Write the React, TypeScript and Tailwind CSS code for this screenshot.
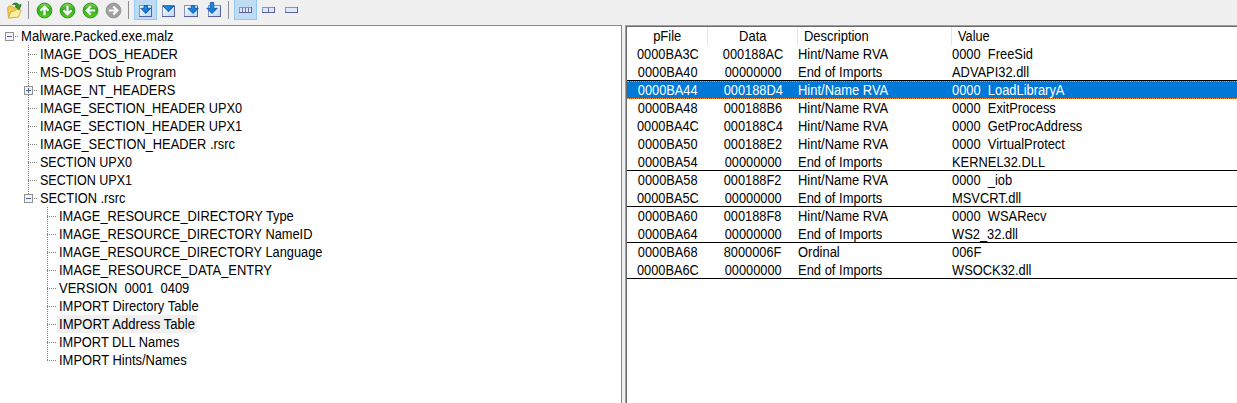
import type { ReactNode } from "react";

type TreeNode = {
  label: string;
  depth: 0 | 1 | 2;
  box?: "plus" | "minus";
  selected?: boolean;
  last?: boolean;
  fit?: string;
};

const tree: TreeNode[] = [
  { label: "Malware.Packed.exe.malz", depth: 0, box: "minus", fit: "scale-x-[0.934]" },
  { label: "IMAGE_DOS_HEADER", depth: 1, fit: "scale-x-[0.923]" },
  { label: "MS-DOS Stub Program", depth: 1, fit: "scale-x-[0.93]" },
  { label: "IMAGE_NT_HEADERS", depth: 1, box: "plus", fit: "scale-x-[0.92]" },
  { label: "IMAGE_SECTION_HEADER UPX0", depth: 1, fit: "scale-x-[0.912]" },
  { label: "IMAGE_SECTION_HEADER UPX1", depth: 1, fit: "scale-x-[0.912]" },
  { label: "IMAGE_SECTION_HEADER .rsrc", depth: 1, fit: "scale-x-[0.918]" },
  { label: "SECTION UPX0", depth: 1, fit: "scale-x-[0.896]" },
  { label: "SECTION UPX1", depth: 1, fit: "scale-x-[0.896]" },
  { label: "SECTION .rsrc", depth: 1, box: "minus", last: true, fit: "scale-x-[0.914]" },
  { label: "IMAGE_RESOURCE_DIRECTORY Type", depth: 2, fit: "scale-x-[0.918]" },
  { label: "IMAGE_RESOURCE_DIRECTORY NameID", depth: 2, fit: "scale-x-[0.915]" },
  { label: "IMAGE_RESOURCE_DIRECTORY Language", depth: 2, fit: "scale-x-[0.915]" },
  { label: "IMAGE_RESOURCE_DATA_ENTRY", depth: 2 },
  { label: "VERSION  0001  0409", depth: 2 },
  { label: "IMPORT Directory Table", depth: 2 },
  { label: "IMPORT Address Table", depth: 2, selected: true, fit: "scale-x-[0.934]" },
  { label: "IMPORT DLL Names", depth: 2, fit: "scale-x-[0.918]" },
  { label: "IMPORT Hints/Names", depth: 2, last: true },
];

type Entry = { file: string; data: string; desc: string; value: string; end?: boolean; selected?: boolean };

const hint = "Hint/Name RVA";
const done = "End of Imports";
const entries: Entry[] = [
  { file: "0000BA3C", data: "000188AC", desc: hint, value: "0000  FreeSid" },
  { file: "0000BA40", data: "00000000", desc: done, value: "ADVAPI32.dll", end: true },
  { file: "0000BA44", data: "000188D4", desc: hint, value: "0000  LoadLibraryA", selected: true },
  { file: "0000BA48", data: "000188B6", desc: hint, value: "0000  ExitProcess" },
  { file: "0000BA4C", data: "000188C4", desc: hint, value: "0000  GetProcAddress" },
  { file: "0000BA50", data: "000188E2", desc: hint, value: "0000  VirtualProtect" },
  { file: "0000BA54", data: "00000000", desc: done, value: "KERNEL32.DLL", end: true },
  { file: "0000BA58", data: "000188F2", desc: hint, value: "0000  _iob" },
  { file: "0000BA5C", data: "00000000", desc: done, value: "MSVCRT.dll", end: true },
  { file: "0000BA60", data: "000188F8", desc: hint, value: "0000  WSARecv" },
  { file: "0000BA64", data: "00000000", desc: done, value: "WS2_32.dll", end: true },
  { file: "0000BA68", data: "8000006F", desc: "Ordinal", value: "006F" },
  { file: "0000BA6C", data: "00000000", desc: done, value: "WSOCK32.dll", end: true },
];

function Text({ children, center, fit = "scale-x-[0.925]" }: { children: ReactNode; center?: boolean; fit?: string }) {
  return (
    <span className={`inline-block whitespace-pre ${fit} ${center ? "origin-center" : "origin-left"}`}>{children}</span>
  );
}

function Connector({ node }: { node: TreeNode }) {
  const width = node.depth === 0 ? 20 : node.depth === 1 ? 39 : 57;
  const x = node.depth === 0 ? 9 : node.depth === 1 ? 28 : 47;
  return (
    <svg width={width} height="18" viewBox={`0 0 ${width} 18`} className="shrink-0" shapeRendering="crispEdges" fill="none">
      <g stroke="#808080" strokeDasharray="1 1">
        {node.depth > 0 && <path d={`M${x + 0.5} 0V${node.last ? 10 : 18}`} />}
        <path d={`M${x} 9.5h9`} />
      </g>
      {node.box && (
        <g>
          <rect x={x - 4} y="5" width="9" height="9" fill="#f4f4f4" />
          <rect x={x - 3.5} y="5.5" width="8" height="8" stroke="#919191" />
          <path d={`M${x - 2} 9.5h5`} stroke="#4b63a7" />
          {node.box === "plus" && <path d={`M${x + 0.5} 7v5`} stroke="#4b63a7" />}
        </g>
      )}
    </svg>
  );
}

function FolderIcon() {
  return (
    <svg width="17" height="18" viewBox="0 0 17 18">
      <path d="M1.500 7 3 5l3.500.3 1 1.700 4-.3 1 1.800-.5 7-9.500 1.500Z" fill="#f2cc55" stroke="#d3a93a" strokeWidth=".9" />
      <path d="m2.500 17 2.300-6.500 4-.5 1.300-1.500 5 .5-2.600 7Z" fill="#ffefa0" stroke="#d3a93a" strokeWidth=".9" />
      <path d="M6.500 3.500c2-2 5-2 6.500.5l2.200-.3-2 4.800L9 5.500l1.700-.6C9.500 3.700 8.300 3.400 6.500 3.500Z" fill="#2f9c2c" stroke="#1c6e1f" strokeWidth=".8" />
    </svg>
  );
}

function RoundArrow({ turn, gray }: { turn: number; gray?: boolean }) {
  return (
    <svg width="17" height="18" viewBox="0 0 17 18">
      <defs>
        <linearGradient id="green" x1="0" y1="0" x2="0" y2="1">
          <stop offset="0" stopColor="#7fd35a" />
          <stop offset=".45" stopColor="#35ab1d" />
          <stop offset="1" stopColor="#55d022" />
        </linearGradient>
      </defs>
      <circle cx="8.500" cy="9.500" r="7.400" fill={gray ? "#a0a0a0" : "url(#green)"} stroke={gray ? "#959595" : "#2f9a1f"} />
      <g transform={`rotate(${turn} 8.5 9.5)`} stroke="#fff" strokeWidth="2.200" fill="none">
        <path d="M8.500 14.200V6M4.500 9.700l4-4 4 4" />
      </g>
    </svg>
  );
}

type WindowKind = "center" | "fold" | "right" | "left";

const arrows: Record<WindowKind, string> = {
  center: "M7 4.500h3.500V7.300h3.300L8.750 12.500 3.700 7.300H7Z",
  fold: "M3 5h11L8.500 10.800Z",
  right: "M8.300 4.500h3.400V7.300h3.500L10 12.500 4.800 7.300h3.500Z",
  left: "M4.300 1.500h3.400V7.300h3.500L6 12.500.8 7.300h3.500Z",
};

function WindowIcon({ kind }: { kind: WindowKind }) {
  const left = kind === "right" ? 1.5 : 2.5;
  const width = kind === "right" ? 13 : 12;
  return (
    <svg width="17" height="18" viewBox="0 0 17 18">
      <defs>
        <linearGradient id="pane" x1="0" y1="0" x2="1" y2="1">
          <stop offset="0" stopColor="#fff" />
          <stop offset="1" stopColor="#b6d5fa" />
        </linearGradient>
        <linearGradient id="arrow" x1="0" y1="0" x2="1" y2="1">
          <stop offset="0" stopColor="#22a4f4" />
          <stop offset="1" stopColor="#0a5fc0" />
        </linearGradient>
      </defs>
      <rect x={left} y="4.500" width={width} height="11" fill="url(#pane)" stroke="#8a93c6" />
      <path d={`M${left - 0.5} 15.500h${width + 1}M${left + width} 5v11`} stroke="#5a5f9e" />
      <path d={arrows[kind]} fill="url(#arrow)" stroke="#0f57ad" strokeWidth=".9" />
    </svg>
  );
}

function BarIcon({ cells }: { cells: 1 | 2 | 4 }) {
  return (
    <svg width="13" height="6" viewBox="0 0 13 6" className="mt-[6px]" shapeRendering="crispEdges" fill="none">
      <rect x=".5" y=".5" width="12" height="5" fill="#dceafc" stroke="#8a93c6" />
      <path d="M0 5.500h13M12.500 0v6" stroke="#5a5f9e" />
      {cells === 2 && <path d="M6.500 1v4" stroke="#6a70aa" />}
      {cells === 4 && <path d="M3.500 1v4M6.500 1v4M9.500 1v4" stroke="#6a70aa" />}
    </svg>
  );
}

function Tool({ children, active }: { children: ReactNode; active?: boolean }) {
  return (
    <div
      className={`flex h-5 w-[23px] shrink-0 items-start justify-center pt-px ${
        active ? "border border-t-0 border-[#90c8f6] bg-[#c0dcf3]" : ""
      }`}
    >
      {children}
    </div>
  );
}

function Separator({ className }: { className: string }) {
  return <div className={`mt-px h-[18px] w-px shrink-0 bg-[#8d8d8d] ${className}`} />;
}

const columns = "grid grid-cols-[81px_90px_154px_1fr]";

export default function App() {
  return (
    <div className="flex h-[403px] w-[1237px] flex-col overflow-hidden bg-[#f0f0f0] font-['Liberation_Sans',Arial,sans-serif] text-[14px] leading-[18px] text-black">
      <header className="flex h-[25px] shrink-0 pl-[3px]">
        <Tool><FolderIcon /></Tool>
        <Separator className="ml-[2px] mr-[4px]" />
        <Tool><RoundArrow turn={0} /></Tool>
        <Tool><RoundArrow turn={180} /></Tool>
        <Tool><RoundArrow turn={270} /></Tool>
        <Tool><RoundArrow turn={90} gray /></Tool>
        <Separator className="ml-[3px] mr-[5px]" />
        <Tool active><WindowIcon kind="center" /></Tool>
        <Tool><WindowIcon kind="fold" /></Tool>
        <Tool><WindowIcon kind="right" /></Tool>
        <Tool><WindowIcon kind="left" /></Tool>
        <Separator className="ml-[2px] mr-[5px]" />
        <Tool active><BarIcon cells={4} /></Tool>
        <Tool><BarIcon cells={2} /></Tool>
        <Tool><BarIcon cells={1} /></Tool>
      </header>
      <main className="flex min-h-0 flex-1">
        <nav className="w-[622px] shrink-0 border-r border-t border-[#828790] bg-white pt-px">
          {tree.map((node) => (
            <div key={node.label} className="flex h-[18px]">
              <Connector node={node} />
              <div
                className={`h-[18px] ${node.depth === 2 ? "pl-[1.5px]" : "pl-[0.5px]"} ${
                  node.selected ? "w-[140px] bg-[#f0f0f0]" : ""
                }`}
              >
                <Text fit={node.fit}>{node.label}</Text>
              </div>
            </div>
          ))}
        </nav>
        <section className="ml-[3px] flex-1 border-l border-t border-[#a0a0a0]">
          <div className="h-full border-l border-t border-[#696969] bg-white">
            <div className={`${columns} h-[18px]`}>
              <div className="border-r border-[#e5e5e5] text-center"><Text center>pFile</Text></div>
              <div className="border-r border-[#e5e5e5] text-center"><Text center>Data</Text></div>
              <div className="border-r border-[#e5e5e5] pl-1.5"><Text>Description</Text></div>
              <div className="pl-1.5"><Text fit="scale-x-[0.91]">Value</Text></div>
            </div>
            {entries.map((e) => (
              <div
                key={e.file}
                className={`${columns} h-[18px] ${e.end ? "border-b border-black" : ""} ${
                  e.selected ? "border-y border-dotted border-[#ff8728] bg-[#0078d7] leading-4 text-white" : ""
                }`}
              >
                <div className="text-center"><Text center fit="scale-x-[0.915]">{e.file}</Text></div>
                <div className="text-center"><Text center fit="scale-x-[0.915]">{e.data}</Text></div>
                <div><Text>{e.desc}</Text></div>
                <div><Text fit="scale-x-[0.92]">{e.value}</Text></div>
              </div>
            ))}
          </div>
        </section>
      </main>
    </div>
  );
}
